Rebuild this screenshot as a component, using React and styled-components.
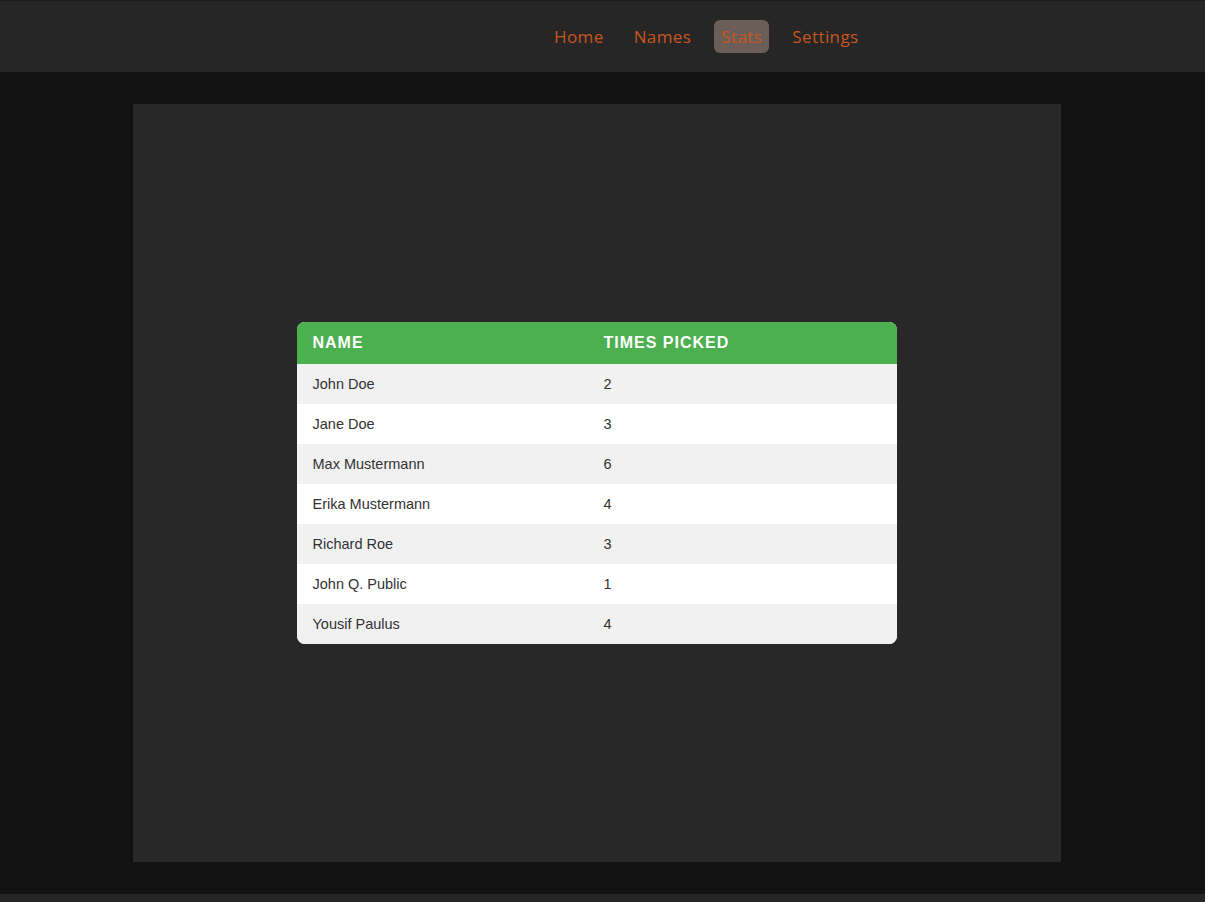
import React from 'react'
import styled, { createGlobalStyle } from 'styled-components'

const GlobalStyle = createGlobalStyle`
  html, body {
    margin: 0;
    padding: 0;
    background: #121212;
  }
  body {
    font-family: "Liberation Sans", Arial, sans-serif;
  }
`

const Page = styled.div`
  min-height: 902px;
  display: flex;
  flex-direction: column;
  background: #121212;
`

const Nav = styled.nav`
  box-sizing: border-box;
  height: 72px;
  background: #262626;
  border-top: 1px solid #1c1c1c;
  display: flex;
  align-items: center;
  padding-left: 547px;
  padding-bottom: 1px;
  gap: 16px;
`

const NavLink = styled.a`
  font-family: "Open Sans", "DejaVu Sans", sans-serif;
  font-size: 17px;
  letter-spacing: 0.4px;
  color: #c8561d;
  text-decoration: none;
  padding: 0 7px;
  height: 33px;
  display: flex;
  align-items: center;
  border-radius: 6px;
  background: ${p => (p.$active ? '#6b5e58' : 'transparent')};
`

const Main = styled.main`
  display: flex;
  justify-content: center;
  padding: 32px 12px 32px 0;
`

const Panel = styled.section`
  width: 928px;
  height: 758px;
  background: #282828;
  display: flex;
  align-items: center;
  justify-content: center;
`

const Table = styled.table`
  width: 600px;
  border-collapse: collapse;
  border-radius: 8px;
  overflow: hidden;
  background: #fff;
  font-family: "Liberation Sans", Arial, sans-serif;
`

const Th = styled.th`
  background: #4caf50;
  color: #fff;
  text-align: left;
  text-transform: uppercase;
  letter-spacing: 1px;
  font-size: 16px;
  font-weight: 700;
  height: 42px;
  padding: 0 16px;
  width: ${p => p.$w || 'auto'};
`

const Row = styled.tr`
  background: ${p => (p.$odd ? '#f1f1f1' : '#ffffff')};
`

const Td = styled.td`
  height: 40px;
  padding: 0 16px;
  font-size: 14.5px;
  color: #333;
`

const Footer = styled.footer`
  height: 8px;
  background: #262626;
`

const rows = [
  ['John Doe', 2],
  ['Jane Doe', 3],
  ['Max Mustermann', 6],
  ['Erika Mustermann', 4],
  ['Richard Roe', 3],
  ['John Q. Public', 1],
  ['Yousif Paulus', 4],
]

export default function App() {
  return (
    <>
      <GlobalStyle />
      <Page>
        <Nav>
          <NavLink href="#">Home</NavLink>
          <NavLink href="#">Names</NavLink>
          <NavLink href="#" $active>Stats</NavLink>
          <NavLink href="#">Settings</NavLink>
        </Nav>
        <Main>
          <Panel>
            <Table>
              <thead>
                <tr>
                  <Th $w="259px">Name</Th>
                  <Th>Times Picked</Th>
                </tr>
              </thead>
              <tbody>
                {rows.map(([name, n], i) => (
                  <Row key={name} $odd={i % 2 === 0}>
                    <Td>{name}</Td>
                    <Td>{n}</Td>
                  </Row>
                ))}
              </tbody>
            </Table>
          </Panel>
        </Main>
        <Footer />
      </Page>
    </>
  )
}
